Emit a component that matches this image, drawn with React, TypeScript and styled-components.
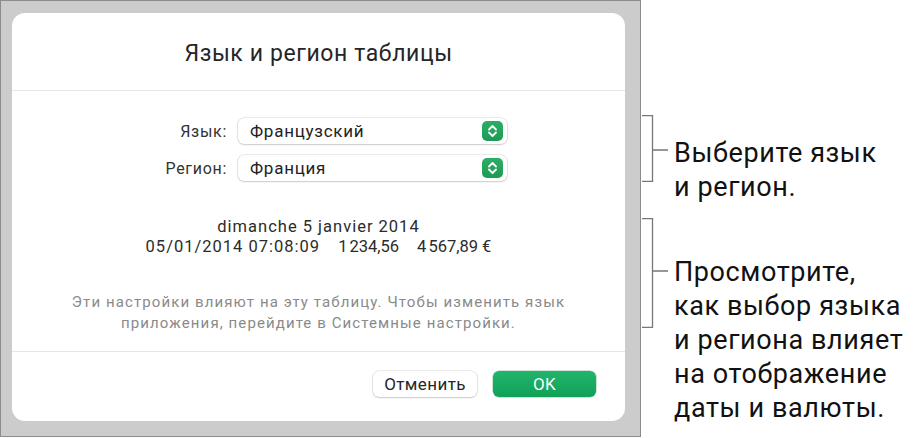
import styled, {createGlobalStyle} from "styled-components";

const GlobalStyle = createGlobalStyle`
    html, body {
        margin: 0;
        padding: 0;
        background: #ffffff;
        font-family: Roboto, "Noto Sans", "Liberation Sans", sans-serif;
    }
`;

const Page = styled.main`
    display: flex;
    width: 921px;
    height: 438px;
    background: #ffffff;
`;

const Backdrop = styled.section`
    box-sizing: border-box;
    width: 641px;
    height: 437px;
    border: 1px solid #8c8c8c;
    background: #cccccc;
    padding: 12px 14px 15px 11px;
`;

const Dialog = styled.div`
    width: 613px;
    height: 408px;
    background: #ffffff;
    border-radius: 13px;
    display: flex;
    flex-direction: column;
`;

const Header = styled.header`
    height: 77px;
    display: flex;
    align-items: center;
    justify-content: center;
    padding-top: 3px;
    box-sizing: border-box;
`;

const Title = styled.h1`
    margin: 0;
    font-size: 23px;
    letter-spacing: 0.6px;
    font-weight: 400;
    color: #262626;
`;

const Divider = styled.hr`
    margin: 0;
    border: none;
    border-top: 1px solid #e6e6e6;
`;

const Body = styled.div`
    flex: 1;
    display: flex;
    flex-direction: column;
    align-items: center;
    padding-top: 27px;
`;

const Form = styled.div`
    align-self: flex-start;
    display: grid;
    grid-template-columns: 215px 269px;
    column-gap: 11px;
    row-gap: 11px;
    align-items: center;
`;

const Label = styled.label`
    font-size: 16px;
    letter-spacing: 0.7px;
    color: #333333;
    text-align: right;
`;

const Select = styled.div`
    position: relative;
    height: 26px;
    border-radius: 6px;
    background: #ffffff;
    box-shadow: 0 0 0 0.5px rgba(0, 0, 0, 0.16), 0 1px 2px rgba(0, 0, 0, 0.14);
    display: flex;
    align-items: center;
    padding-left: 12px;
    font-size: 17px;
    letter-spacing: 0.75px;
    color: #222222;
`;

const Stepper = styled.span`
    position: absolute;
    right: 4px;
    top: 3px;
    width: 21px;
    height: 20px;
    border-radius: 5px;
    background: linear-gradient(#2cae66, #1d9a55);
    display: flex;
    align-items: center;
    justify-content: center;
`;

const Preview = styled.div`
    margin-top: 36px;
    text-align: center;
    font-size: 16.5px;
    letter-spacing: 1px;
    line-height: 20px;
    color: #2b2b2b;
`;

const PreviewRow = styled.div`
    display: flex;
    justify-content: center;
    gap: 18px;
`;

const Info = styled.p`
    margin: 35px 0 0;
    text-align: center;
    font-size: 15px;
    letter-spacing: 1.1px;
    line-height: 21px;
    color: #8a8a8a;
`;

const Footer = styled.footer`
    height: 69px;
    box-sizing: border-box;
    display: flex;
    justify-content: flex-end;
    align-items: flex-start;
    gap: 16px;
    padding: 19px 29px 0 0;
`;

const Button = styled.button<{ $primary?: boolean }>`
    width: ${(p) => (p.$primary ? "103px" : "104px")};
    height: 26px;
    padding: 0;
    border: none;
    border-radius: 6px;
    font-family: inherit;
    font-size: 17px;
    letter-spacing: 0.4px;
    color: ${(p) => (p.$primary ? "#ffffff" : "#262626")};
    background: ${(p) => (p.$primary ? "linear-gradient(#22b46a, #0ea258)" : "#ffffff")};
    box-shadow: ${(p) =>
        p.$primary
            ? "0 0 0 0.5px rgba(0, 120, 60, 0.4)"
            : "0 0 0 0.5px rgba(0, 0, 0, 0.16), 0 1px 2px rgba(0, 0, 0, 0.14)"};
`;

const Notes = styled.aside`
    display: flex;
    flex-direction: column;
    padding-top: 115px;
`;

const Callout = styled.div<{ $gap: number }>`
    display: flex;
    margin-bottom: ${(p) => p.$gap}px;
`;

const CalloutText = styled.p<{ $offset: number }>`
    margin: ${(p) => p.$offset}px 0 0 5px;
    font-size: 27px;
    letter-spacing: 0.6px;
    line-height: 34px;
    color: #111111;
`;

function Chevrons() {
    return (
        <svg width="21" height="20" viewBox="0 0 21 20">
            <path d="M7 8.5 L10.5 5 L14 8.5 M7 11.5 L10.5 15 L14 11.5" fill="none" stroke="#ffffff"
                  strokeWidth="1.8" strokeLinecap="round" strokeLinejoin="round"/>
        </svg>
    );
}

function Bracket({height, tick}: { height: number, tick: number }) {
    return (
        <svg width="28" height={height} viewBox={`0 0 28 ${height}`}>
            <path d={`M1 0.5 H11.5 V${height - 0.5} H1 M11.5 ${tick} H27`} fill="none" stroke="#777777"
                  strokeWidth="1.3"/>
        </svg>
    );
}

export default function App() {
    return (
        <>
            <GlobalStyle/>
            <Page>
                <Backdrop>
                    <Dialog>
                        <Header>
                            <Title>Язык и регион таблицы</Title>
                        </Header>
                        <Divider/>
                        <Body>
                            <Form>
                                <Label>Язык:</Label>
                                <Select>Французский<Stepper><Chevrons/></Stepper></Select>
                                <Label>Регион:</Label>
                                <Select>Франция<Stepper><Chevrons/></Stepper></Select>
                            </Form>
                            <Preview>
                                <div>dimanche 5 janvier 2014</div>
                                <PreviewRow>
                                    <span>05/01/2014 07:08:09</span>
                                    <span>1{"\u202f"}234,56</span>
                                    <span>4{"\u202f"}567,89 €</span>
                                </PreviewRow>
                            </Preview>
                            <Info>
                                Эти настройки влияют на эту таблицу. Чтобы изменить язык<br/>
                                приложения, перейдите в Системные настройки.
                            </Info>
                        </Body>
                        <Divider/>
                        <Footer>
                            <Button>Отменить</Button>
                            <Button $primary>OK</Button>
                        </Footer>
                    </Dialog>
                </Backdrop>
                <Notes>
                    <Callout $gap={14}>
                        <Bracket height={67} tick={35}/>
                        <CalloutText $offset={21}>Выберите язык<br/>и регион.</CalloutText>
                    </Callout>
                    <Callout $gap={0}>
                        <Bracket height={110} tick={53}/>
                        <CalloutText $offset={37}>
                            Просмотрите,<br/>как выбор языка<br/>и региона влияет<br/>на отображение<br/>даты и валюты.
                        </CalloutText>
                    </Callout>
                </Notes>
            </Page>
        </>
    );
}
